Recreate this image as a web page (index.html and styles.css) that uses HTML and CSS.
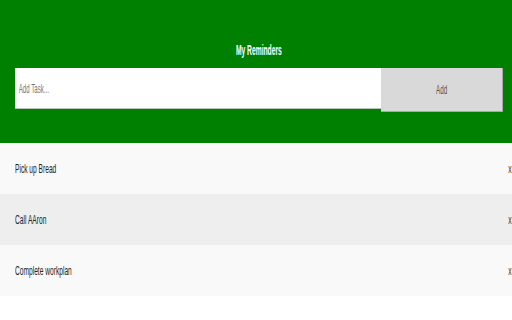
FILE: index.html
```html
<!DOCTYPE html>
<html lang="en">
<head>
<meta charset="utf-8">
<title>My Reminders</title>
<link rel="stylesheet" href="styles.css">
</head>
<body>
  <header class="header">
    <h2 class="title"><span class="sq sq-center">My Reminders</span></h2>
    <form class="add-form">
      <div class="field"><input type="text" placeholder="Add Task..."></div>
      <button type="button" class="add-btn"><span class="sq sq-center">Add</span></button>
    </form>
  </header>
  <ul class="list">
    <li class="item"><span class="sq">Pick up Bread</span><span class="close sq sq-right">x</span></li>
    <li class="item"><span class="sq">Call AAron</span><span class="close sq sq-right">x</span></li>
    <li class="item"><span class="sq">Complete workplan</span><span class="close sq sq-right">x</span></li>
  </ul>
</body>
</html>
```

FILE: styles.css
```css
html, body {
  margin: 0;
  padding: 0;
  background: #ffffff;
  font-family: "Liberation Sans", Arial, sans-serif;
}

.sq {
  display: inline-block;
  transform: scaleX(0.51);
  transform-origin: left center;
  white-space: nowrap;
}
.sq-center { transform-origin: center center; }
.sq-right { transform-origin: right center; }

.header {
  background: #008000;
  padding: 40px 9px 31px 15px;
  display: flex;
  flex-direction: column;
  gap: 8px;
}

.title {
  margin: 0;
  text-align: center;
  color: #ffffff;
  font-size: 14px;
  font-weight: bold;
  line-height: 20px;
}
.title .sq { transform: scaleX(0.48); }

.add-form {
  display: flex;
  align-items: flex-start;
  margin: 0;
  height: 44px;
}

.field {
  flex: 1;
  height: 40px;
  background: #ffffff;
  border-bottom: 1px solid #b8c8b8;
  overflow: hidden;
}

.field input {
  width: 200%;
  height: 40px;
  box-sizing: border-box;
  border: 0;
  outline: none;
  background: transparent;
  padding: 0 0 0 8px;
  margin: 0;
  font-family: "Liberation Sans", Arial, sans-serif;
  font-size: 13px;
  color: #333;
  transform: scaleX(0.47);
  transform-origin: left center;
}
.field input::placeholder { color: #777777; }

.add-btn {
  width: 122px;
  height: 44px;
  margin: 0;
  padding: 0;
  background: #d9d9d9;
  border: 0;
  border-right: 1px solid #a8a8a8;
  border-bottom: 1px solid #a8a8a8;
  font-family: "Liberation Sans", Arial, sans-serif;
  font-size: 13px;
  color: #555555;
}
.add-btn .sq { transform: scaleX(0.48); }

.list {
  list-style: none;
  margin: 0;
  padding: 0;
}

.item {
  display: flex;
  align-items: center;
  justify-content: space-between;
  height: 51px;
  padding: 0 1px 0 15px;
  background: #f9f9f9;
  color: #222222;
  font-size: 13px;
}
.item:nth-child(even) { background: #eeeeee; }

.close { color: #333333; }
```
